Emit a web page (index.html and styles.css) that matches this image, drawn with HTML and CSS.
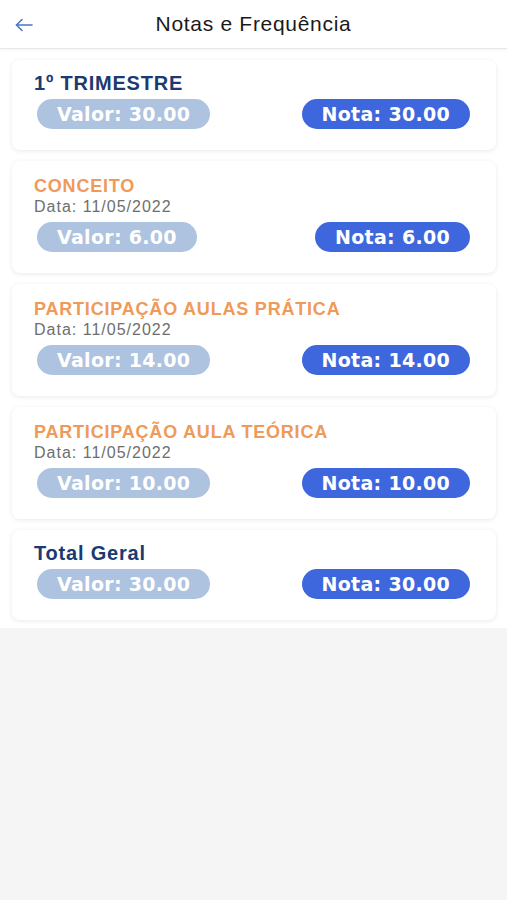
FILE: index.html
```html
<!DOCTYPE html>
<html lang="pt-BR">
<head>
  <meta charset="UTF-8" />
  <meta name="viewport" content="width=device-width, initial-scale=1.0"/>
  <title>Notas e Frequência</title>
  <link rel="stylesheet" href="styles.css">
</head>
<body>

  <header class="topbar">
    <button class="back-btn" aria-label="Voltar">
      <svg width="18" height="14" viewBox="0 0 18 14" fill="none" stroke="#4a78c2" stroke-width="1.6" stroke-linecap="round" stroke-linejoin="round">
        <path d="M17 7H1.5" />
        <path d="M7 1.5L1.5 7L7 12.5" />
      </svg>
    </button>
    <h1>Notas e Frequência</h1>
  </header>

  <main class="lista">

    <div class="card">
      <div class="titulo titulo-periodo">1º TRIMESTRE</div>
      <div class="valores">
        <span class="pill pill-valor">Valor: 30.00</span>
        <span class="pill pill-nota">Nota: 30.00</span>
      </div>
    </div>

    <div class="card">
      <div class="titulo titulo-atividade">CONCEITO</div>
      <div class="data">Data: 11/05/2022</div>
      <div class="valores">
        <span class="pill pill-valor">Valor: 6.00</span>
        <span class="pill pill-nota">Nota: 6.00</span>
      </div>
    </div>

    <div class="card">
      <div class="titulo titulo-atividade">PARTICIPAÇÃO AULAS PRÁTICA</div>
      <div class="data">Data: 11/05/2022</div>
      <div class="valores">
        <span class="pill pill-valor">Valor: 14.00</span>
        <span class="pill pill-nota">Nota: 14.00</span>
      </div>
    </div>

    <div class="card">
      <div class="titulo titulo-atividade">PARTICIPAÇÃO AULA TEÓRICA</div>
      <div class="data">Data: 11/05/2022</div>
      <div class="valores">
        <span class="pill pill-valor">Valor: 10.00</span>
        <span class="pill pill-nota">Nota: 10.00</span>
      </div>
    </div>

    <div class="card">
      <div class="titulo titulo-periodo">Total Geral</div>
      <div class="valores">
        <span class="pill pill-valor">Valor: 30.00</span>
        <span class="pill pill-nota">Nota: 30.00</span>
      </div>
    </div>

  </main>

</body>
</html>
```

FILE: styles.css
```css
body {
  margin: 0;
  font-family: "Liberation Sans", Arial, sans-serif;
  background-color: #f5f5f5;
  color: #222;
}

.topbar {
  display: flex;
  align-items: center;
  justify-content: center;
  position: relative;
  height: 48px;
  background-color: white;
  border-bottom: 1px solid #e8e8e8;
  box-shadow: 0 1px 3px rgba(0, 0, 0, 0.05);
}

.topbar h1 {
  margin: 0;
  font-size: 21px;
  font-weight: normal;
  letter-spacing: 0.7px;
  color: #1a1a1a;
}

.back-btn {
  position: absolute;
  left: 15px;
  top: 18px;
  padding: 0;
  background: none;
  border: none;
  cursor: pointer;
}

.lista {
  display: flex;
  flex-direction: column;
  gap: 11px;
  padding: 11px 11px 8px 12px;
  background-color: white;
}

.card {
  padding: 12px 26px 21px 22px;
  background-color: white;
  border-radius: 8px;
  box-shadow: 0 1px 5px rgba(0, 0, 0, 0.09);
}

.titulo {
  line-height: 22px;
  font-weight: bold;
}

.titulo-periodo {
  font-size: 20px;
  letter-spacing: 0.8px;
  color: #1c3a70;
}

.titulo-atividade {
  margin-top: 2px;
  font-size: 18px;
  letter-spacing: 0.8px;
  color: #ef9a58;
}

.data {
  line-height: 20px;
  font-size: 16px;
  letter-spacing: 1px;
  color: #6e6e6e;
}

.valores {
  display: flex;
  justify-content: space-between;
  margin-top: 5px;
  padding-left: 3px;
}

.pill {
  height: 30px;
  line-height: 30px;
  padding: 0 20px;
  border-radius: 15px;
  font-family: "DejaVu Sans", Verdana, sans-serif;
  font-size: 19px;
  font-weight: bold;
  letter-spacing: 0.3px;
  color: white;
}

.pill-valor {
  background-color: #aec3df;
}

.pill-nota {
  background-color: #3f67dd;
}
```
